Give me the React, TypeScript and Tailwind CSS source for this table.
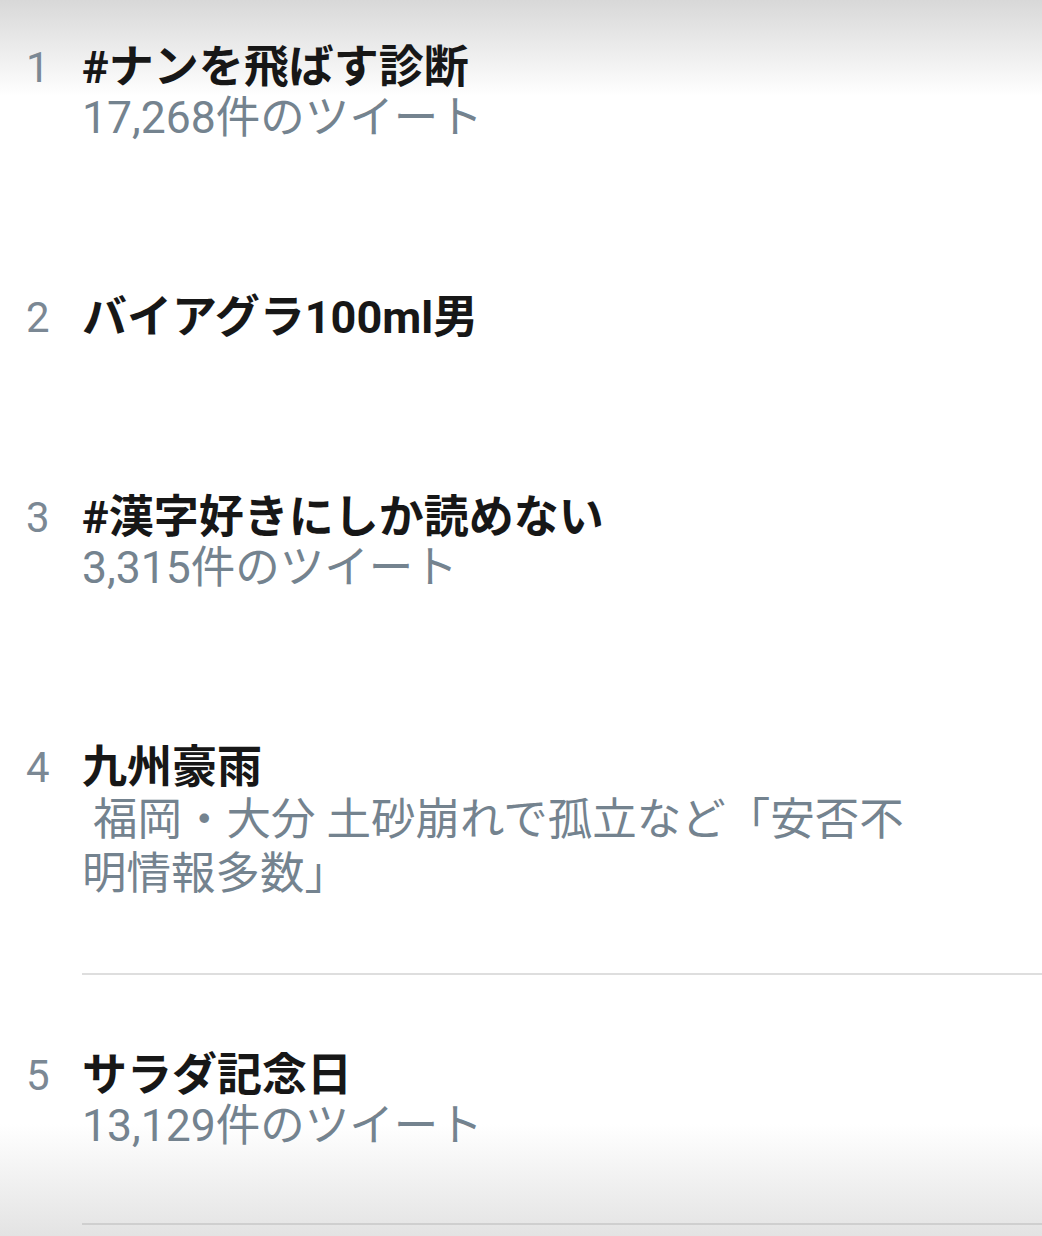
import React from "react";

type Item = {
  rank: number;
  title: string;
  sub?: string;
  subLh?: string;
  divider: "none" | "light" | "dark";
};

const items: Item[] = [
  { rank: 1, title: "#ナンを飛ばす診断", sub: "17,268件のツイート", divider: "none" },
  { rank: 2, title: "バイアグラ100ml男", divider: "none" },
  { rank: 3, title: "#漢字好きにしか読めない", sub: "3,315件のツイート", divider: "none" },
  {
    rank: 4,
    title: "九州豪雨",
    sub: "\u00a0福岡・大分 土砂崩れで孤立など「安否不明情報多数」",
    subLh: "leading-[54px]",
    divider: "light",
  },
  { rank: 5, title: "サラダ記念日", sub: "13,129件のツイート", divider: "dark" },
];

export default function App() {
  return (
    <div
      className="relative w-full h-[1236px] overflow-hidden bg-white"
      style={{ fontFamily: "Roboto, 'Noto Sans CJK JP', sans-serif" }}
    >
      <div className="pointer-events-none absolute left-0 top-0 h-[96px] w-full bg-gradient-to-b from-[#d8d8d8] to-white/0" />
      <div className="pointer-events-none absolute left-0 bottom-0 h-[112px] w-full bg-gradient-to-b from-white/0 to-[#e3e3e3]" />
      <div className="relative flex flex-col pt-[43px]">
        {items.map((it) => (
          <div key={it.rank} className="flex flex-col">
            <div className="flex">
              <div className="w-[82px] shrink-0 pl-[26px] text-[42px] leading-[50px] text-[#7b8894]">
                {it.rank}
              </div>
              <div className="flex-1 min-w-0">
                <div className="text-[45px] leading-[50px] font-bold text-[#171717]">
                  {it.title}
                </div>
                {it.sub && (
                  <div
                    className={`max-w-[840px] text-[44.5px] ${it.subLh ?? "leading-[50px]"} text-[#74838f]`}
                  >
                    {it.sub}
                  </div>
                )}
              </div>
            </div>
            <div
              className={`mt-[72px] mb-[76px] ml-[82px] h-[2px] ${
                it.divider === "light"
                  ? "bg-[#dedede]"
                  : it.divider === "dark"
                  ? "bg-[#cfcfcf]"
                  : "bg-transparent"
              }`}
            />
          </div>
        ))}
      </div>
    </div>
  );
}
